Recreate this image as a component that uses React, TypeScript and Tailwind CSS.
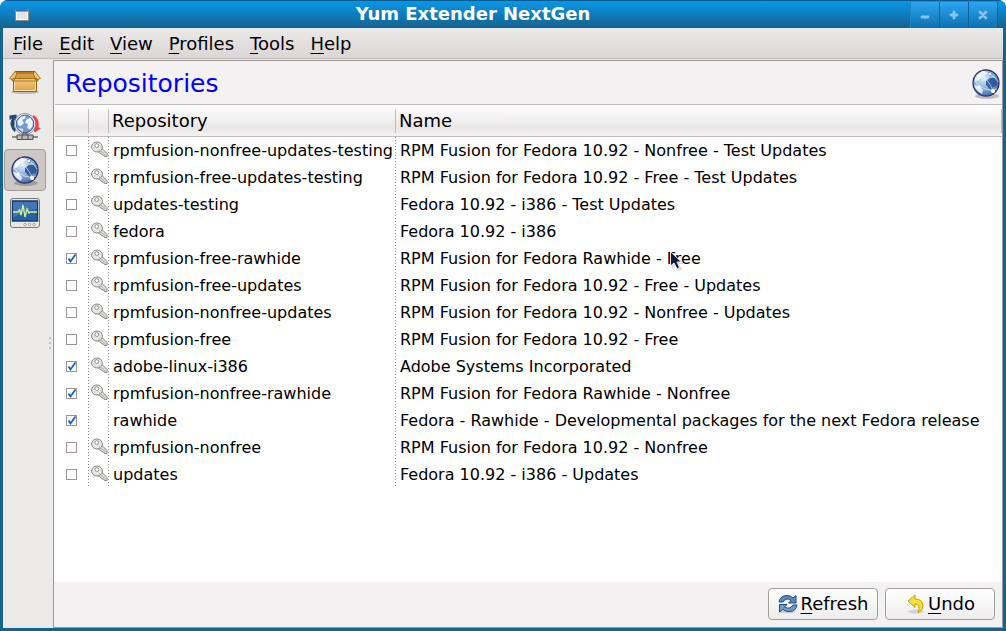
import React from "react";

type Repo = { id: string; name: string; on?: boolean; key?: boolean };

const repos: Repo[] = [
  { id: "rpmfusion-nonfree-updates-testing", name: "RPM Fusion for Fedora 10.92 - Nonfree - Test Updates", key: true },
  { id: "rpmfusion-free-updates-testing", name: "RPM Fusion for Fedora 10.92 - Free - Test Updates", key: true },
  { id: "updates-testing", name: "Fedora 10.92 - i386 - Test Updates", key: true },
  { id: "fedora", name: "Fedora 10.92 - i386", key: true },
  { id: "rpmfusion-free-rawhide", name: "RPM Fusion for Fedora Rawhide - Free", key: true, on: true },
  { id: "rpmfusion-free-updates", name: "RPM Fusion for Fedora 10.92 - Free - Updates", key: true },
  { id: "rpmfusion-nonfree-updates", name: "RPM Fusion for Fedora 10.92 - Nonfree - Updates", key: true },
  { id: "rpmfusion-free", name: "RPM Fusion for Fedora 10.92 - Free", key: true },
  { id: "adobe-linux-i386", name: "Adobe Systems Incorporated", key: true, on: true },
  { id: "rpmfusion-nonfree-rawhide", name: "RPM Fusion for Fedora Rawhide - Nonfree", key: true, on: true },
  { id: "rawhide", name: "Fedora - Rawhide - Developmental packages for the next Fedora release", on: true },
  { id: "rpmfusion-nonfree", name: "RPM Fusion for Fedora 10.92 - Nonfree", key: true },
  { id: "updates", name: "Fedora 10.92 - i386 - Updates", key: true },
];

const menus = ["File", "Edit", "View", "Profiles", "Tools", "Help"];

function Mnemonic({ text }: { text: string }) {
  return (
    <span>
      <span className="underline decoration-1 underline-offset-3">{text[0]}</span>
      {text.slice(1)}
    </span>
  );
}

function GlobeIcon({ className }: { className: string }) {
  return (
    <svg viewBox="0 0 30 32" className={className} aria-hidden="true">
      <defs>
        <radialGradient id="sea" cx="0.4" cy="0.3" r="0.75">
          <stop offset="0" stopColor="#e2eefa" />
          <stop offset="0.5" stopColor="#8fb5e0" />
          <stop offset="1" stopColor="#3a68a8" />
        </radialGradient>
      </defs>
      <ellipse cx="16" cy="28" rx="12" ry="3" fill="#000" opacity="0.22" />
      <circle cx="15" cy="15" r="13" fill="url(#sea)" stroke="#32366d" strokeWidth="1.3" />
      <path d="M4 10 Q7 4 13 3 L16 5 L13 8 L10 8 L8 12 L4 14Z M3 17 L8 18 L12 22 L11 26 Q5 23 3 17Z" fill="#f4f8fc" opacity="0.85" />
      <path d="M15 13 L19 10 L24 10 L27 13 L26 18 L22 19 L20 22 L17 19 L15 17Z M17 4 L22 6 L19 8Z" fill="#285594" opacity="0.9" />
      <path d="M4 13 Q13 25 26 21 M6 7 Q17 8 23 25 M10 3 Q22 5 27 14" fill="none" stroke="#fff" strokeWidth="1" opacity="0.6" />
      <g fill="#fff"><circle cx="8" cy="9" r="1.8" /><circle cx="22" cy="23" r="2.1" /><circle cx="8" cy="19" r="1.5" /><circle cx="19" cy="6" r="1.3" /></g>
    </svg>
  );
}

function BoxIcon() {
  return (
    <svg viewBox="0 0 34 26" className="h-[26px] w-[34px]" aria-hidden="true">
      <defs>
        <linearGradient id="carton" x1="0" y1="0" x2="0" y2="1">
          <stop offset="0" stopColor="#f3cd86" /><stop offset="1" stopColor="#dc9f45" />
        </linearGradient>
      </defs>
      <ellipse cx="17" cy="23" rx="14" ry="2" opacity="0.2" />
      <path d="M7 2.500H27L28 10H6Z" fill="#b97a24" stroke="#8f5902" />
      <path d="M8 5H26L28 9H6Z" fill="#d49a48" />
      <path d="M5.500 10H28.500V22.500H5.500Z" fill="url(#carton)" stroke="#9a6408" />
      <path d="M6.500 12V21.500H27.500V12" fill="none" stroke="#fbe0a5" />
      <path d="M7 2.500L9 4L6 11.500L1.500 9.500Z M27 2.500L25 4L28 11.500L32.500 9.500Z M5 9.500H29L30 12H4Z" fill="#efc47a" stroke="#9a6408" strokeWidth="0.8" />
    </svg>
  );
}

function UpdateIcon() {
  return (
    <svg viewBox="0 0 34 29" className="h-[29px] w-[34px]" aria-hidden="true">
      <path d="M6.500 20Q0 13 4 6.500L1.500 8V3.500L8.500 2.500L9 8L7 7.500Q4.500 12 8 18Z" fill="#204a77" />
      <path d="M26 3Q32 8 30.500 15.500L33 16L27 20.500L24 16H27Q28.500 10 24 5Z" fill="#ef3f3f" />
      <circle cx="17" cy="12" r="10.600" fill="#f1f3f7" stroke="#8d8fa3" />
      <circle cx="17" cy="12" r="8.800" fill="#6e9bd2" stroke="#3c5f99" />
      <path d="M9.500 9L13 4.500L18 4L17 6.500L14 8L16 11L13 14L10 13Z M18 8L22 5.500L25 10L24.500 14L22 17.500L19 16L20 12L17 11Z M10 16L15 17L15 20Z" fill="#edf3fb" />
      <path d="M15 21H19V24H15Z" fill="#a3a5a1" stroke="#555" strokeWidth="0.800" />
      <path d="M4 25H30" stroke="#8b8d89" strokeWidth="2" />
      <path d="M9 23H25V27.500H9Z" fill="#b7b9b5" stroke="#444" strokeWidth="0.900" />
      <path d="M14 22.500V28M20 22.500V28" stroke="#555" />
    </svg>
  );
}

function MonitorIcon() {
  return (
    <svg viewBox="0 0 32 32" className="size-8" aria-hidden="true">
      <rect x="1.500" y="1.500" width="29" height="29" rx="2.500" fill="#e8e8e4" stroke="#777973" />
      <rect x="3.500" y="4" width="25" height="20" fill="#2761a5" stroke="#173a68" strokeWidth="1.500" />
      <path d="M4 5H28V12Q14 13 4 21Z" fill="#5b8bc4" opacity="0.550" />
      <path d="M4 15H9L10.500 13L12 18L14 8L16 20L18 12L20 16L21 15H28" fill="none" stroke="#cdf28c" strokeWidth="1.400" />
      <g fill="#fff" stroke="#888" strokeWidth="0.800"><circle cx="16" cy="27.500" r="1.200" /><circle cx="20.500" cy="27.500" r="1.200" /><circle cx="25" cy="27.500" r="1.200" /></g>
    </svg>
  );
}

function KeyIcon() {
  return (
    <svg viewBox="0 0 17 17" className="size-[17px]" aria-hidden="true">
      <path d="M10 6.500L16 12.500V15.500H13.500L12.500 14H11L10 12.500L8.500 12L6.500 10" fill="#deded9" stroke="#888a85" strokeLinejoin="round" />
      <ellipse cx="6" cy="6" rx="5.400" ry="5" fill="#e6e7e3" stroke="#888a85" />
      <circle cx="5.800" cy="4.600" r="1.900" fill="#fff" stroke="#888a85" strokeWidth="0.900" />
      <path d="M8 8.500L14.500 14" stroke="#b0b2ad" />
    </svg>
  );
}

function RefreshIcon() {
  return (
    <svg viewBox="0 0 20 20" className="size-5" aria-hidden="true">
      <ellipse cx="10" cy="18" rx="8" ry="1.500" opacity="0.150" />
      <path d="M1 8Q2 1.500 9 1.500Q13 1.500 15 4L18 1.500V9H10.500L13 6.500Q8 3 5 8Z" fill="#5a88bd" stroke="#204a87" strokeLinejoin="round" />
      <path d="M19 11Q18 17.500 11 17.500Q7 17.500 5 15.500L1.500 18V10.500H9L6.500 13Q12 16 15 11Z" fill="#6f9aca" stroke="#204a87" strokeLinejoin="round" />
    </svg>
  );
}

function UndoIcon() {
  return (
    <svg viewBox="0 0 20 20" className="size-5" aria-hidden="true">
      <ellipse cx="11" cy="17.500" rx="8" ry="2" opacity="0.120" />
      <path d="M3 7L10 1V5Q18 5 18 12Q18 16 13 18.500Q15 14 13.500 11.500Q12.500 10 10 10V13.500Z" fill="#f5df3e" stroke="#c9a300" strokeLinejoin="round" />
    </svg>
  );
}

function TitleButton({ label, path }: { label: string; path: string }) {
  return (
    <button aria-label={label} className="flex h-[26px] w-[29px] items-center justify-center border-r border-[#0a5f96] bg-linear-to-b from-[#2ba6f2] to-[#0a71b0]">
      <svg viewBox="0 0 10 10" className="size-[10px]" aria-hidden="true">
        <path d={path} stroke="#84c4ea" strokeWidth="2.800" strokeLinecap="round" />
      </svg>
    </button>
  );
}

const headCell = "relative h-[33px] border-y border-[#c0bbbb] p-0 text-left font-normal";
const headRule = "absolute top-1 right-0 h-6 w-px bg-[#c0bbbb]";
const dots = "bg-[linear-gradient(to_bottom,#8a8a8a_1px,transparent_1px)] bg-[length:1px_3px] bg-right-top bg-repeat-y";
const actionButton = "flex h-8 w-[110px] items-center justify-center gap-[3px] rounded-[4px] border border-[#a39d9c] bg-linear-to-b from-white to-[#eeecec]";

export default function App() {
  return (
    <div className="min-h-screen bg-white font-['DejaVu_Sans',sans-serif] text-black">
      <div className="flex min-h-screen flex-col overflow-hidden rounded-t-lg bg-[#14648f] px-[3px] pb-[3px]">
        <header className="-mx-[3px] flex h-7 shrink-0 items-center border-t border-[#0b5a8d] bg-linear-to-b from-[#0597ea] to-[#13638f]">
          <svg viewBox="0 0 14 12" className="ml-[15px] h-3 w-[14px]" aria-hidden="true">
            <rect x="0.500" y="0.500" width="13" height="11" fill="#e4e5e2" stroke="#888a85" />
            <path d="M1 1.500H13" stroke="#3465a4" strokeWidth="2" />
            <path d="M1.500 3V10.500H12.500V3" fill="none" stroke="#fff" />
          </svg>
          <h1 className="flex-1 pb-[2px] pl-[7px] text-center text-[18px] leading-6 font-bold text-white">Yum Extender NextGen</h1>
          <div className="flex border-l border-[#1b87c5] pr-2">
            <TitleButton label="Minimize" path="M2 7H8" />
            <TitleButton label="Maximize" path="M5 2V8M2 5H8" />
            <TitleButton label="Close" path="M2 2L8 8M8 2L2 8" />
          </div>
        </header>

        <nav className="flex h-[31px] shrink-0 items-center gap-4 border-b border-[#bcb6b5] bg-linear-to-b from-[#ebe9e9] to-[#dad6d5] px-[10px] pt-px text-[18px] leading-6">
          {menus.map((m) => (
            <button key={m}><Mnemonic text={m} /></button>
          ))}
        </nav>

        <div className="flex flex-1 bg-[#ebeae8] pt-px">
          <aside className="relative flex w-[50px] shrink-0 flex-col items-center pr-[6px]">
            <button aria-label="Packages" className="flex h-[44px] w-full items-center justify-center"><BoxIcon /></button>
            <button aria-label="Updates" className="flex h-[45px] w-full items-center justify-center"><UpdateIcon /></button>
            <button aria-label="Repositories" className="flex size-[42px] items-center justify-center rounded-sm border border-[#a39b9a] bg-[#cdc8c6] pt-[2px]"><GlobeIcon className="h-8 w-[30px]" /></button>
            <button aria-label="Output" className="flex h-[44px] w-full items-center justify-center"><MonitorIcon /></button>
            <div className="absolute top-[277px] right-0 flex w-1 flex-col gap-[3px]">
              <i className="size-[2px] bg-[#c3bfbd]" /><i className="size-[2px] bg-[#c3bfbd]" /><i className="size-[2px] bg-[#c3bfbd]" />
            </div>
          </aside>

          <main className="flex min-w-0 flex-1 flex-col border border-[#9f9897] bg-[#f3f1f2] pl-px">
            <div className="flex h-[43px] items-center justify-between pt-[2px] pr-px pl-[10px]">
              <h2 className="text-[25px] leading-7 text-[#0000ff]">Repositories</h2>
              <GlobeIcon className="h-8 w-[30px]" />
            </div>
            <div className="flex-1 bg-white">
              <table className="w-full table-fixed border-separate border-spacing-0">
                <colgroup>
                  <col className="w-[34px]" /><col className="w-5" /><col className="w-[287px]" /><col />
                </colgroup>
                <thead className="bg-linear-to-b from-white via-[#e9e7e6] via-75% to-[#f6f5f5] text-[18px] leading-6">
                  <tr>
                    <th className={headCell} aria-label="Enabled"><i className={headRule} /></th>
                    <th className={headCell} aria-label="Signed"><i className={headRule} /></th>
                    <th className={`${headCell} pl-[3px]`}>Repository<i className={headRule} /></th>
                    <th className={`${headCell} pl-[3px]`}>Name<i className={headRule} /></th>
                  </tr>
                </thead>
                <tbody className="text-[16px] leading-5 whitespace-nowrap">
                  {repos.map((r) => (
                    <tr key={r.id} className="h-[27px]">
                      <td className={`p-0 ${dots}`}>
                        <label className="relative ml-[11px] block size-[11px]">
                          <input type="checkbox" aria-label={r.id} defaultChecked={r.on} className="peer block size-[11px] appearance-none border border-[#9d9594] bg-white" />
                          <svg viewBox="0 0 11 11" className="pointer-events-none absolute inset-0 hidden size-[11px] peer-checked:block" aria-hidden="true">
                            <path d="M2.500 5.500L4.500 8.500L9.500 1.500" fill="none" stroke="#0c60c8" strokeWidth="1.800" />
                          </svg>
                        </label>
                      </td>
                      <td className={`p-0 pb-[2px] ${dots}`}><div className="flex h-[17px] justify-center">{r.key && <KeyIcon />}</div></td>
                      <td className={`p-0 pl-1 ${dots}`}>{r.id}</td>
                      <td className="p-0 pl-1">{r.name}</td>
                    </tr>
                  ))}
                </tbody>
              </table>
            </div>
            <footer className="flex h-[45px] items-center justify-end gap-[7px] pr-[7px] pb-[2px] text-[18px] leading-6">
              <button className={actionButton}><RefreshIcon /><Mnemonic text="Refresh" /></button>
              <button className={actionButton}><UndoIcon /><Mnemonic text="Undo" /></button>
            </footer>
          </main>
        </div>
      </div>
      <svg viewBox="0 0 16 22" className="pointer-events-none absolute top-[250px] left-[669px] h-[22px] w-4" aria-hidden="true">
        <path d="M3 3V18L7 15L10 21L13 19L10 14H15Z" opacity="0.150" />
        <path d="M1.500 1.500V16L5 13L8 19L10.500 17.500L8 12H12.500Z" fill="#14183c" stroke="#fff" strokeWidth="0.900" />
      </svg>
    </div>
  );
}
